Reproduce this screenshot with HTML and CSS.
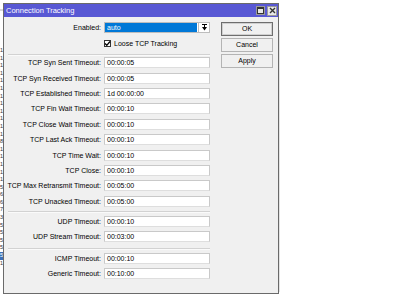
FILE: index.html
```html
<!DOCTYPE html>
<html>
<head>
	<title>Connection Tracking</title>
	<link rel="stylesheet" href="styles.css">
</head>
<body>
	<div class="desktop">
		<!-- fenetre derriere, on n'en voit que le bord -->
		<div class="bgwin">
			<div class="bgtop"></div>
			<div class="bglist">
				<span>1</span><span>1</span><span>1</span><span>1</span><span>1</span>
				<span>1</span><span>1</span><span>1</span><span>1</span><span>1</span>
				<span>1</span><span>1</span><span>8</span><span>1</span><span>1</span>
				<span>1</span><span>1</span><span>1</span><span>5</span><span>6</span>
				<span>6</span><span>7</span><span>3</span><span>5</span><span>5</span>
				<span>5</span><span>5</span><span class="sel">5</span><span>1</span>
			</div>
		</div>

		<div class="window">
			<div class="titlebar">
				<span class="title">Connection Tracking</span>
				<span class="tbtn">
					<svg width="7" height="7" viewBox="0 0 7 7"><rect x="0.5" y="0.5" width="6" height="6" fill="none" stroke="#333" stroke-width="1"/><line x1="0" y1="1.5" x2="7" y2="1.5" stroke="#333" stroke-width="1"/></svg>
				</span>
				<span class="tbtn close">
					<svg width="7" height="7" viewBox="0 0 7 7"><path d="M1 1 L6 6 M6 1 L1 6" stroke="#333" stroke-width="1.4"/></svg>
				</span>
			</div>

			<div class="body">
				<div class="form">
					<div class="row enabled">
						<label>Enabled:</label>
						<div class="select">
							<span class="val">auto</span>
							<span class="arrow">
								<svg width="7" height="7" viewBox="0 0 7 7"><path d="M1 0.5 H6 M3.5 1 V4" stroke="#000" stroke-width="1"/><path d="M1 3 L6 3 L3.5 6.5 Z" fill="#000"/></svg>
							</span>
						</div>
					</div>
					<div class="row check">
						<span></span>
						<div class="cb">
							<span class="box">
								<svg width="7" height="7" viewBox="0 0 7 7"><path d="M1 3.5 L2.8 5.3 L6 1.5" fill="none" stroke="#000" stroke-width="1.3"/></svg>
							</span>
							Loose TCP Tracking
						</div>
					</div>

					<div class="sep first"></div>

					<div class="row field"><label>TCP Syn Sent Timeout:</label><div class="input">00:00:05</div></div>
					<div class="row field"><label>TCP Syn Received Timeout:</label><div class="input">00:00:05</div></div>
					<div class="row field"><label>TCP Established Timeout:</label><div class="input">1d 00:00:00</div></div>
					<div class="row field"><label>TCP Fin Wait Timeout:</label><div class="input">00:00:10</div></div>
					<div class="row field"><label>TCP Close Wait Timeout:</label><div class="input">00:00:10</div></div>
					<div class="row field"><label>TCP Last Ack Timeout:</label><div class="input">00:00:10</div></div>
					<div class="row field"><label>TCP Time Wait:</label><div class="input">00:00:10</div></div>
					<div class="row field"><label>TCP Close:</label><div class="input">00:00:10</div></div>
					<div class="row field"><label>TCP Max Retransmit Timeout:</label><div class="input">00:05:00</div></div>
					<div class="row field"><label>TCP Unacked Timeout:</label><div class="input">00:05:00</div></div>

					<div class="sep udp"></div>

					<div class="row field"><label>UDP Timeout:</label><div class="input">00:00:10</div></div>
					<div class="row field"><label>UDP Stream Timeout:</label><div class="input">00:03:00</div></div>

					<div class="sep icmp"></div>

					<div class="row field"><label>ICMP Timeout:</label><div class="input">00:00:10</div></div>
					<div class="row field"><label>Generic Timeout:</label><div class="input">00:10:00</div></div>
				</div>

				<div class="side">
					<button class="btn default">OK</button>
					<button class="btn">Cancel</button>
					<button class="btn">Apply</button>
				</div>
			</div>
		</div>
		<div class="shadow"></div>
	</div>
</body>
</html>
```

FILE: styles.css
```css
body {
	margin: 0;
	background-color: #fff;
	font-family: "Liberation Sans", Arial, sans-serif;
	font-size: 7px;
	color: #000;
}
.desktop {
	position: relative;
	width: 400px;
	height: 296px;
	overflow: hidden;
}

/* fenetre de fond */
.bgwin {
	position: absolute;
	left: 0;
	top: 0;
	width: 3px;
	height: 296px;
	background-color: #fff;
}
.bgtop {
	height: 2px;
	background-color: #d8d8d8;
	margin-top: 9px;
}
.bglist {
	display: flex;
	flex-direction: column;
	align-items: flex-start;
	padding-top: 36px;
}
.bglist span {
	display: block;
	height: 7.6px;
	line-height: 7.6px;
	font-size: 5.5px;
	color: #333;
}
.bglist .sel {
	background-color: #3d6fb8;
	color: #fff;
}

/* fenetre principale */
.window {
	position: absolute;
	left: 3px;
	top: 3px;
	width: 274px;
	height: 289px;
	border: 1px solid #6a6a6a;
	background-color: #f0f0f0;
}
.shadow {
	position: absolute;
	left: 279px;
	top: 30px;
	width: 1px;
	height: 262px;
	background-color: #e4e4e4;
}
.titlebar {
	height: 13px;
	background-color: #5858d4;
	display: flex;
	align-items: center;
	padding-left: 2px;
	padding-right: 1px;
}
.title {
	flex: 1;
	color: #fff;
	font-size: 7.5px;
}
.tbtn {
	width: 9px;
	height: 9px;
	background-color: #e8e8e8;
	border: 1px solid #9a9a9a;
	box-sizing: border-box;
	display: flex;
	align-items: center;
	justify-content: center;
	margin-left: 2px;
}
.tbtn.close {
	width: 10px;
	height: 10px;
}

.body {
	display: flex;
	padding-top: 5px;
}
.form {
	width: 206px;
}
.row {
	display: grid;
	grid-template-columns: 98px 106px;
	column-gap: 2px;
	align-items: center;
}
.row label {
	text-align: right;
	white-space: nowrap;
	padding-right: 1px;
}
.row.enabled {
	height: 11px;
}
.row.check {
	height: 10px;
	margin-top: 5px;
}
.row.field {
	height: 15.4px;
}

.select {
	display: flex;
	height: 11px;
	box-sizing: border-box;
	border: 1px solid #bdbdbd;
	background-color: #fff;
}
.select .val {
	flex: 1;
	background-color: #0078d7;
	color: #fff;
	line-height: 9px;
	padding-left: 2px;
	margin-right: 1px;
}
.select .arrow {
	width: 10px;
	border-left: 1px solid #bdbdbd;
	display: flex;
	align-items: center;
	justify-content: center;
}

.cb {
	display: flex;
	align-items: center;
	gap: 3px;
}
.cb .box {
	width: 7px;
	height: 7px;
	box-sizing: border-box;
	border: 1px solid #333;
	background-color: #fff;
	display: flex;
	align-items: center;
	justify-content: center;
}
.cb .box svg {
	flex: none;
}

.input {
	height: 11px;
	box-sizing: border-box;
	border: 1px solid #c9c9c9;
	border-bottom-color: #dedede;
	background-color: #fff;
	line-height: 9px;
	padding-left: 2px;
}

.sep {
	height: 0;
	border-top: 1px solid #d2d2d2;
	border-bottom: 1px solid #fafafa;
	margin-left: 4px;
	width: 202px;
}
.sep.first {
	margin-top: 6px;
	margin-bottom: -1px;
}
.sep.udp {
	margin-top: 2px;
	margin-bottom: 1px;
}
.sep.icmp {
	margin-top: 3px;
	margin-bottom: 1px;
}

.side {
	display: flex;
	flex-direction: column;
	gap: 2.5px;
	margin-left: 11px;
}
.btn {
	width: 52px;
	height: 13.5px;
	padding: 0;
	font-family: "Liberation Sans", Arial, sans-serif;
	font-size: 7px;
	color: #000;
	background-color: #f0f0f0;
	border: 1px solid #b4b4b4;
	border-radius: 0;
}
.btn.default {
	border: 1px solid #6e6e6e;
	box-shadow: inset 0 0 0 1px #d0d0d0;
}
```
